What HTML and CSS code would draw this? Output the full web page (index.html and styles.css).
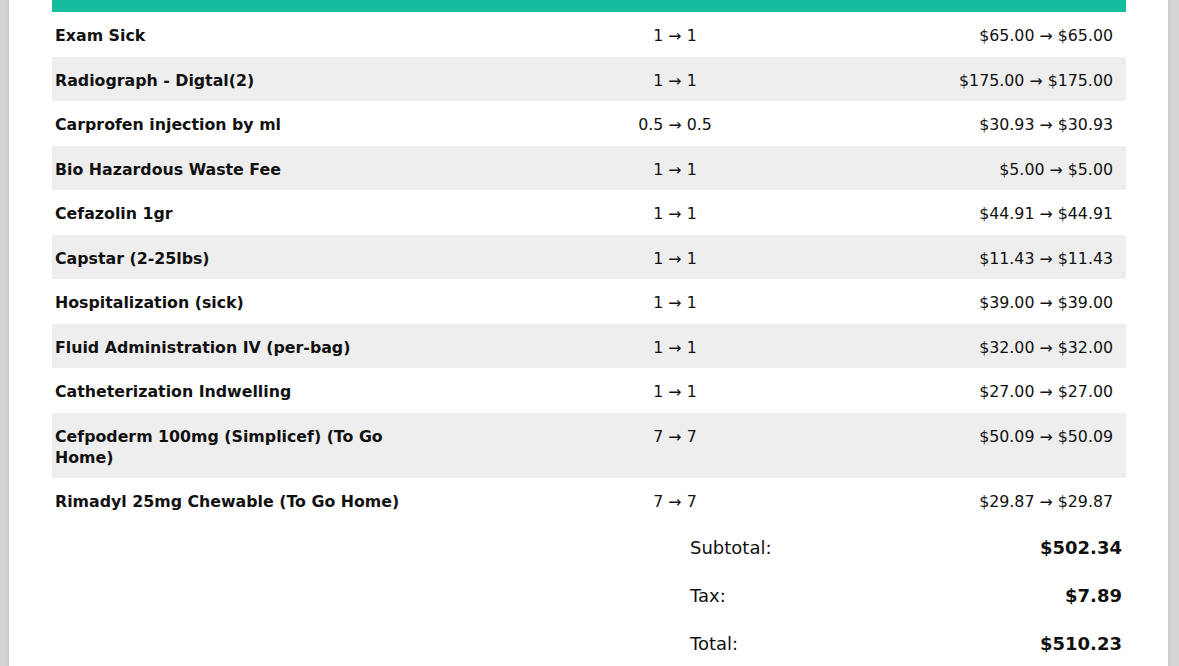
FILE: index.html
```html
<!DOCTYPE html>
<html>
<head>
<meta charset="utf-8">
<link rel="stylesheet" href="styles.css">
</head>
<body>
<div class="paper">
  <table class="items">
    <thead>
      <tr><th class="c-name">Description</th><th class="c-qty">Qty</th><th class="c-price">Price</th></tr>
    </thead>
    <tbody>
      <tr><td class="c-name">Exam Sick</td><td class="c-qty">1 → 1</td><td class="c-price">$65.00 → $65.00</td></tr>
      <tr><td class="c-name">Radiograph - Digtal(2)</td><td class="c-qty">1 → 1</td><td class="c-price">$175.00 → $175.00</td></tr>
      <tr><td class="c-name">Carprofen injection by ml</td><td class="c-qty">0.5 → 0.5</td><td class="c-price">$30.93 → $30.93</td></tr>
      <tr><td class="c-name">Bio Hazardous Waste Fee</td><td class="c-qty">1 → 1</td><td class="c-price">$5.00 → $5.00</td></tr>
      <tr><td class="c-name">Cefazolin 1gr</td><td class="c-qty">1 → 1</td><td class="c-price">$44.91 → $44.91</td></tr>
      <tr><td class="c-name">Capstar (2-25lbs)</td><td class="c-qty">1 → 1</td><td class="c-price">$11.43 → $11.43</td></tr>
      <tr><td class="c-name">Hospitalization (sick)</td><td class="c-qty">1 → 1</td><td class="c-price">$39.00 → $39.00</td></tr>
      <tr><td class="c-name">Fluid Administration IV (per-bag)</td><td class="c-qty">1 → 1</td><td class="c-price">$32.00 → $32.00</td></tr>
      <tr><td class="c-name">Catheterization Indwelling</td><td class="c-qty">1 → 1</td><td class="c-price">$27.00 → $27.00</td></tr>
      <tr><td class="c-name">Cefpoderm 100mg (Simplicef) (To Go Home)</td><td class="c-qty">7 → 7</td><td class="c-price">$50.09 → $50.09</td></tr>
      <tr><td class="c-name">Rimadyl 25mg Chewable (To Go Home)</td><td class="c-qty">7 → 7</td><td class="c-price">$29.87 → $29.87</td></tr>
    </tbody>
  </table>
  <div class="totals">
    <div class="t-row"><span class="t-label">Subtotal:</span><span class="t-value">$502.34</span></div>
    <div class="t-row"><span class="t-label">Tax:</span><span class="t-value">$7.89</span></div>
    <div class="t-row"><span class="t-label">Total:</span><span class="t-value">$510.23</span></div>
  </div>
</div>
</body>
</html>
```

FILE: styles.css
```css
html, body {
  margin: 0;
  padding: 0;
}
body {
  background: #d5d5d5;
  font-family: "DejaVu Sans", sans-serif;
  color: #111;
  overflow: hidden;
  height: 666px;
}
.paper {
  background: #fff;
  margin: -33px 11px 0 9px;
  padding: 0 42px 40px 43px;
  box-shadow: 0 0 4px rgba(0,0,0,0.12);
}
.items {
  width: 100%;
  border-collapse: collapse;
  table-layout: fixed;
  font-size: 15.8px;
  line-height: 21px;
}
.items th {
  background: #16bd9d;
  color: #1f5f52;
  font-weight: bold;
  padding: 13px 13px 11px 3px;
  height: 21px;
}
.items td {
  padding: 13px 13px 10.5px 3px;
  vertical-align: top;
}
.items tbody tr:nth-child(even) td {
  background: #eeeeee;
}
.c-name {
  width: 369px;
  text-align: left;
  font-weight: bold;
}
.items td.c-name {
  padding-right: 13px;
}
.c-qty {
  width: 470px;
  text-align: center;
}
.items td.c-qty, .items th.c-qty {
  padding-left: 3px;
  padding-right: 3px;
}
.c-price {
  text-align: right;
}
.items td.c-qty, .items td.c-price {
  font-weight: normal;
}
.totals {
  margin-left: 638px;
  margin-right: 4px;
  font-size: 18px;
}
.t-row {
  display: flex;
  justify-content: space-between;
  align-items: center;
  height: 48px;
  padding-top: 1px;
  box-sizing: border-box;
}
.t-value {
  font-weight: bold;
}
```
